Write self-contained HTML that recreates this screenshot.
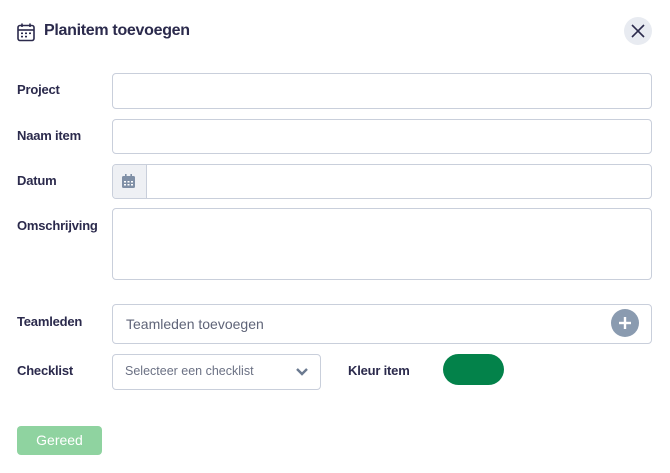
<!DOCTYPE html>
<html><head><style>
*{box-sizing:border-box;margin:0;padding:0}
body{width:670px;height:473px;background:#fff;font-family:"Liberation Sans",sans-serif;color:#2b2a4c;position:relative;overflow:hidden}
.a{position:absolute}
.lbl{position:absolute;left:17px;font-size:13px;letter-spacing:-0.2px;font-weight:bold;color:#2b2a4c}
.in{position:absolute;left:112px;width:540px;border:1px solid #c9cfdb;border-radius:4px;background:#fff}
</style></head><body>
<svg class="a" style="left:16px;top:22px" width="20" height="20" viewBox="0 0 20 20" fill="none" stroke="#2b2a4c" stroke-width="1.6"><rect x="2" y="3.5" width="16" height="15" rx="2"/><line x1="2" y1="8" x2="18" y2="8"/><line x1="6" y1="1.5" x2="6" y2="5"/><line x1="14" y1="1.5" x2="14" y2="5"/><g fill="#2b2a4c" stroke="none"><rect x="5" y="10.5" width="2" height="1.6"/><rect x="9" y="10.5" width="2" height="1.6"/><rect x="13" y="10.5" width="2" height="1.6"/><rect x="5" y="13.8" width="2" height="1.6"/><rect x="9" y="13.8" width="2" height="1.6"/></g></svg>
<div class="a" style="left:44px;top:22px;font-size:16px;letter-spacing:-0.3px;color:#2b2a4c;font-weight:bold">Planitem toevoegen</div>
<div class="a" style="left:624px;top:17px;width:28px;height:28px;border-radius:50%;background:#e8ebf1"></div>
<svg class="a" style="left:630px;top:23px" width="16" height="16" viewBox="0 0 16 16" stroke="#2b2a4c" stroke-width="1.6"><line x1="2" y1="2" x2="14" y2="14"/><line x1="14" y1="2" x2="2" y2="14"/></svg>
<div class="lbl" style="top:82px">Project</div>
<div class="in" style="top:73px;height:36px"></div>
<div class="lbl" style="top:128px">Naam item</div>
<div class="in" style="top:119px;height:35px"></div>
<div class="lbl" style="top:173px">Datum</div>
<div class="in" style="top:164px;height:35px;overflow:hidden"><div style="width:34px;height:100%;background:#eef0f4;border-right:1px solid #c9cfdb"></div></div>
<svg class="a" style="left:122px;top:174px" width="13" height="14" viewBox="0 0 13 14"><rect x="0" y="2" width="13" height="12" rx="1.5" fill="#7f8fa6"/><rect x="3" y="0" width="1.6" height="3" fill="#7f8fa6"/><rect x="8.4" y="0" width="1.6" height="3" fill="#7f8fa6"/><g fill="#fff"><rect x="2" y="7" width="2" height="1.5"/><rect x="5.5" y="7" width="2" height="1.5"/><rect x="9" y="7" width="2" height="1.5"/><rect x="2" y="10" width="2" height="1.5"/><rect x="5.5" y="10" width="2" height="1.5"/><rect x="9" y="10" width="2" height="1.5"/></g></svg>
<div class="lbl" style="top:218px">Omschrijving</div>
<div class="in" style="top:208px;height:72px"></div>
<div class="lbl" style="top:314px">Teamleden</div>
<div class="in" style="top:304px;height:40px"></div>
<div class="a" style="left:126px;top:316px;font-size:14px;color:#5f6478">Teamleden toevoegen</div>
<div class="a" style="left:611px;top:309px;width:28px;height:28px;border-radius:50%;background:#8a9bb0"></div>
<svg class="a" style="left:617px;top:315px" width="16" height="16" stroke="#fff" stroke-width="2.4"><line x1="8" y1="2" x2="8" y2="14"/><line x1="2" y1="8" x2="14" y2="8"/></svg>
<div class="lbl" style="top:363px">Checklist</div>
<div class="a" style="left:112px;top:354px;width:209px;height:36px;border:1px solid #c9cfdb;border-radius:4px"></div>
<div class="a" style="left:125px;top:364px;font-size:12.5px;color:#6b7184">Selecteer een checklist</div>
<svg class="a" style="left:295px;top:367px" width="14" height="10" fill="none" stroke="#6b7a90" stroke-width="2.4"><polyline points="2,2 7,7 12,2"/></svg>
<div class="a" style="left:348px;top:363px;font-size:13px;letter-spacing:-0.2px;font-weight:bold;color:#2b2a4c">Kleur item</div>
<div class="a" style="left:443px;top:354px;width:61px;height:31px;border-radius:16px;background:#03824a"></div>
<div class="a" style="left:17px;top:426px;width:85px;height:29px;border-radius:4px;background:#8fd3a0;color:#fff;font-size:14px;text-align:center;line-height:29px">Gereed</div>
</body></html>
